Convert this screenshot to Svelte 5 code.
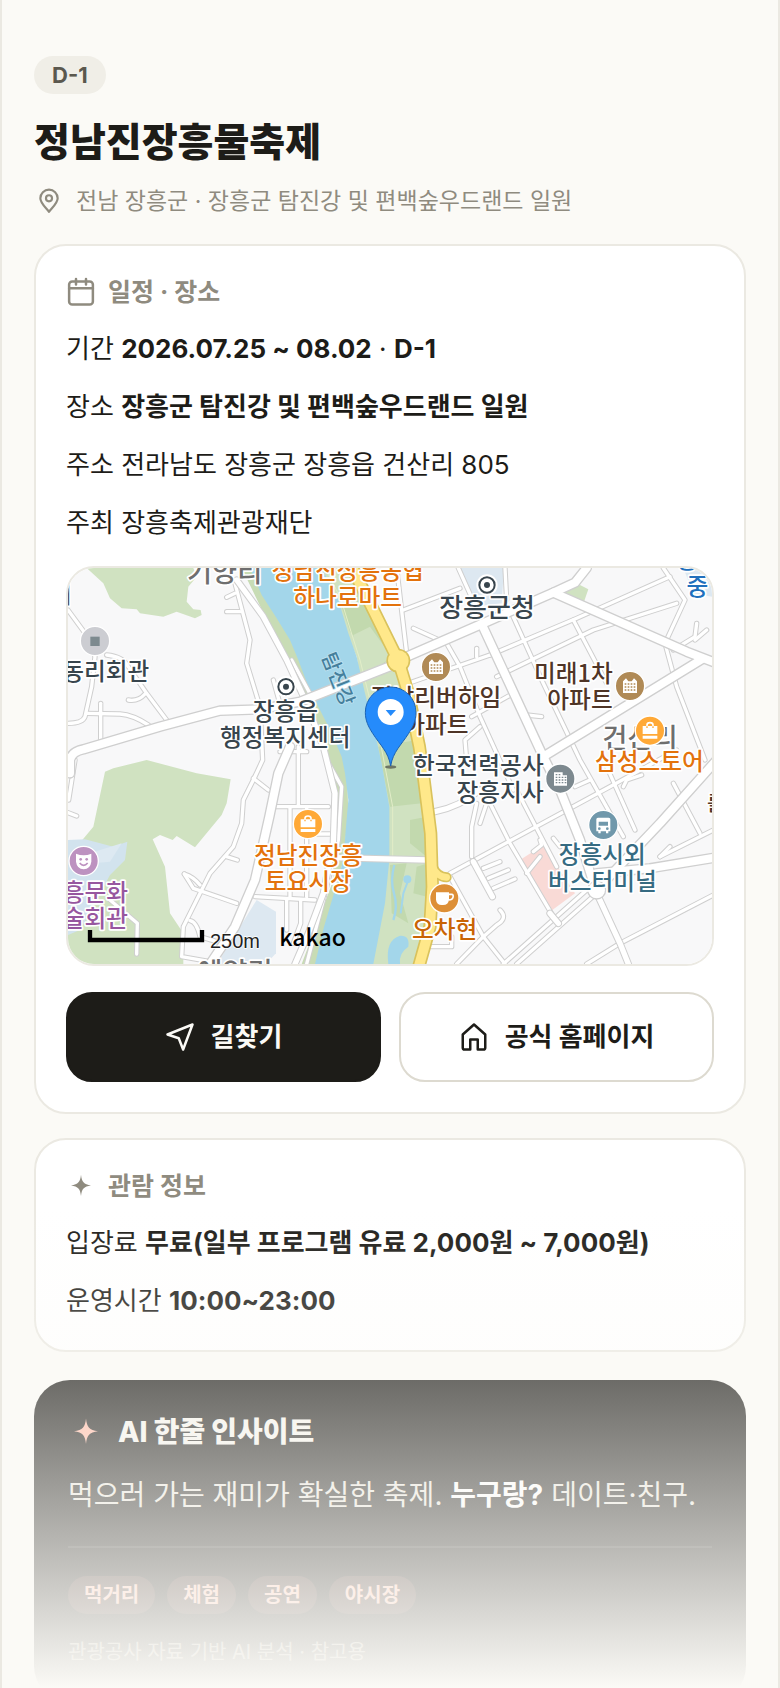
<script>
  const rows = [
    { label: "기간", strong: "2026.07.25 ~ 08.02", tail: "·", extra: "D-1" },
    { label: "장소", strong: "장흥군 탐진강 및 편백숲우드랜드 일원" },
    { label: "주소", text: "전라남도 장흥군 장흥읍 건산리 805" },
    { label: "주최", text: "장흥축제관광재단" },
  ];

  const visit = [
    { label: "입장료", strong: "무료(일부 프로그램 유료 2,000원 ~ 7,000원)" },
    { label: "운영시간", strong: "10:00~23:00" },
  ];

  const tags = ["먹거리", "체험", "공연", "야시장"];

  // map geometry: three units per pixel
  const lanes = [
    "M525 70L570 240L560 310L600 440L608 600L580 660L550 720L545 790L520 860L450 940L370 1100L365 1190L450 1205",
    "M24 150L90 240L105 290L95 380L75 470Q68 490 24 490",
    "M140 285Q190 290 205 320L260 400L320 480",
    "M80 460L180 462Q220 465 265 495",
    "M122 430V540",
    "M500 155H540",
    "M500 112L525 100",
    "M205 420Q235 425 255 402",
    "M695 300L755 410",
    "M640 360L665 450",
    "M580 655L625 690",
    "M373 942L400 985L530 1030",
    "M373 942Q400 950 420 975",
    "M500 890L532 900",
    "M390 1082Q410 1085 420 1130L470 1145",
    "M640 740H805",
    "M715 560V738",
    "M690 740V1010",
    "M740 740V1010",
    "M585 1010L765 1020",
    "M680 1020V1110",
    "M722 1020V1090L700 1150",
    "M765 822H810",
    "M230 1182L232 1090L150 1020",
    "M45 600L26 720",
    "M24 758L50 768",
    "M800 600L845 680L835 840L790 1020L740 1212",
    "M660 575H740",
    "M1010 24L1040 280",
    "M1030 150L1200 85",
    "M1195 24L1265 180",
    "M1335 24L1340 120",
    "M1355 160L1450 370L1560 600L1690 830",
    "M1290 285L1550 175L1830 50",
    "M1310 350L1600 210L1850 130",
    "M1810 24L1875 120L1815 250L1850 380L1935 600",
    "M1540 180L1640 370",
    "M1060 205L1160 250L1200 320L1260 470L1360 690",
    "M1045 370L1290 285",
    "M1910 190L1905 230L1840 270",
    "M1940 210L1905 240",
    "M1235 470L1360 400L1400 465L1445 470",
    "M1250 290V265",
    "M1220 600L1215 540L1260 500",
    "M1170 940L1650 680L1850 570",
    "M1285 720L1350 850L1480 1070",
    "M1370 690L1490 920",
    "M1170 950L1270 1130L1335 1212",
    "M1580 990L1330 1212",
    "M1610 1000L1370 1212",
    "M1270 1130L1190 1212",
    "M1580 1212L1680 1150L1960 1005",
    "M1640 620L1725 810",
    "M1840 670L1920 820",
    "M1800 890L1960 810",
    "M1800 890L1830 860",
    "M1250 730L1235 800V890",
    "M1290 700L1260 790",
    "M1270 925L1320 905",
    "M1285 955L1345 930",
    "M1300 985L1365 957",
    "M1320 1050Q1345 1075 1310 1095L1270 1130",
    "M1420 875L1445 855L1440 840",
    "M1480 835L1500 860",
    "M1545 680L1590 660",
    "M1690 680L1700 660L1745 645",
    "M1400 940L1440 890",
    "M1115 1160H1175V1130",
  ];
  const streets = [
    "M530 60L610 170L680 300L740 430L790 560L825 700L820 850L790 1000L745 1120L705 1212",
    "M1125 755Q1200 740 1260 690",
    "M1240 905L1297 1010",
    "M1615 1010L1680 1150L1705 1212",
    "M1470 1060L1495 1090",
    "M820 893L1105 900",
  ];
  const avenues = [
    "M30 640V600Q35 575 70 568L300 500L480 452L600 448L720 425L1000 315L1045 288L1265 192L1480 98L1545 68L1580 24",
    "M1265 192L1445 580L1500 690L1560 840L1610 1000",
    "M1480 98L1880 275L1970 310",
    "M1925 298L1450 590",
    "M1970 600L1800 790L1610 990",
    "M1610 940L1770 925L1970 892",
    "M690 560L655 640L628 770L585 960L525 1100L445 1220",
  ];

  const labels = [
    { t: "기양리", x: 607, y: 66, s: 82, a: "end", c: "#6e6e6e" },
    { t: "리", x: 37, y: 130, s: 82, a: "end", c: "#55585c" },
    { t: "정남진장흥농협", x: 863, y: 58, c: "#e3720c" },
    { t: "하나로마트", x: 863, y: 138, c: "#e3720c" },
    { t: "동리회관", x: 268, y: 360, a: "end" },
    { t: "장흥읍", x: 676, y: 480 },
    { t: "행정복지센터", x: 676, y: 559 },
    { t: "장흥군청", x: 1281, y: 172, s: 78 },
    { t: "정남리버하임", x: 1128, y: 438, c: "#4f3527" },
    { t: "아파트", x: 1128, y: 518, c: "#4f3527" },
    { t: "미래1차", x: 1658, y: 365, a: "end", c: "#4f3527" },
    { t: "아파트", x: 1658, y: 444, a: "end", c: "#4f3527" },
    { t: "건산리", x: 1740, y: 563, s: 82, c: "#6e6e6e" },
    { t: "삼성스토어", x: 1768, y: 630, c: "#e3720c" },
    { t: "한국전력공사", x: 1451, y: 643, a: "end" },
    { t: "장흥지사", x: 1451, y: 722, a: "end" },
    { t: "장흥시외", x: 1627, y: 910, c: "#366b82" },
    { t: "버스터미널", x: 1627, y: 990, c: "#366b82" },
    { t: "오차현", x: 1154, y: 1134, c: "#c96405" },
    { t: "정남진장흥", x: 745, y: 911, c: "#e3720c" },
    { t: "토요시장", x: 745, y: 990, c: "#e3720c" },
    { t: "장흥문화", x: 204, y: 1022, a: "end", c: "#97579f" },
    { t: "예술회관", x: 204, y: 1102, a: "end", c: "#97579f" },
    { t: "흥", x: 1882, y: 25, c: "#2170bd" },
    { t: "중", x: 1912, y: 104, c: "#2170bd" },
    { t: "예양리", x: 525, y: 1265, s: 82, c: "#6e6e6e" },
    { t: "를", x: 1941, y: 752, s: 60, a: "start", c: "#4f3527" },
  ];
</script>

{#snippet spark()}
  <svg class="spark" viewBox="0 0 24 24" aria-hidden="true">
    <path d="M12 3C12.600 8.800 14.200 10.600 20 11.500C14.200 12.400 12.600 14.200 12 20C11.400 14.200 9.800 12.400 4 11.500C9.800 10.600 11.400 8.800 12 3Z" fill="currentColor" />
  </svg>
{/snippet}

{#snippet roads(list, size)}
  {#each list as d}<path class="road {size} edge" {d} />{/each}
  {#each list as d}<path class="road {size}" {d} />{/each}
{/snippet}

<main class="page">
  <header class="head">
    <span class="badge">D-1</span>
    <h1>정남진장흥물축제</h1>
    <p class="where">
      <svg viewBox="0 0 24 24" aria-hidden="true">
        <path d="M12 22C9 18 4 14 4 9.500a8 8 0 0 1 16 0C20 14 15 18 12 22Z" />
        <circle cx="12" cy="9.500" r="2.800" />
      </svg>
      전남 장흥군 · 장흥군 탐진강 및 편백숲우드랜드 일원
    </p>
  </header>

  <section class="card">
    <h2>
      <svg viewBox="0 0 24 24" aria-hidden="true">
        <rect x="2.500" y="3.500" width="19" height="18.500" rx="2.500" />
        <path d="M2.500 9H21.500M8 1.500V6M16 1.500V6" />
      </svg>
      일정 · 장소
    </h2>
    {#each rows as row}
      <p class="row">
        {row.label}
        {#if row.strong}<strong>{row.strong}</strong>{/if}
        {#if row.extra}{row.tail} <strong>{row.extra}</strong>{/if}
        {row.text ?? ""}
      </p>
    {/each}

    <div class="map">
      <svg viewBox="24 24 1932 1188" preserveAspectRatio="xMidYMid slice" role="img" aria-label="지도">
        <rect x="0" y="0" width="2000" height="1300" fill="#f8f8f9" />

        <!-- hills and parks -->
        <g fill="#d0e2c1">
          <path d="M80 24L130 70L150 115L185 145L230 148L240 160L310 170L350 155L405 175L425 165L422 150L400 148L380 125L385 80L410 50L400 24Z" />
          <path d="M160 625L260 600L410 640L512 658L500 730L485 765L405 862L350 828L338 840L300 825L278 838L315 920L330 1060L370 1120V1212H24V1000L50 860L100 800L135 635Z" />
          <path d="M1505 100L1560 75L1585 88L1572 125L1510 108Z" />
          <path d="M780 24H880L1010 300L1085 620L1112 850L1115 1000L1080 1212H920L985 900L890 290Z" />
        </g>
        <path d="M545 24H600L860 600L865 760L850 900L770 1212H725L820 960L832 760L800 600L715 400L640 220Z" fill="#c8dcb5" />
        <g fill="#c2d9ae">
          <path d="M835 110L890 90L1000 270L960 330L870 215Z" />
          <path d="M955 560L1070 540L1085 730L990 740Z" />
          <path d="M990 915L1040 910L1020 1000L1045 1090L995 1060Z" />
          <path d="M1050 780L1100 770V890L1050 850Z" />
          <path d="M1070 920L1105 910L1100 1010L1060 1000Z" />
        </g>
        <path d="M880 225L930 200L995 290L915 350Z" fill="#d0e2c1" />
        <g fill="#dde8f1">
          <path d="M1200 24H1332L1325 130L1235 140Z" />
          <path d="M590 1020L648 1055V1180L600 1230H460Z" />
          <path d="M1870 24H1956V110L1900 100Z" />
        </g>
        <path d="M24 840L75 838L160 860L202 845L195 900L150 945L60 1110L24 1125Z" fill="#d2e3ee" />
        <path d="M90 880L185 850L150 905L100 910Z" fill="#dde9f2" />
        <path d="M1380 900L1450 855L1545 1000L1470 1055Z" fill="#f9dad6" />

        <!-- river -->
        <path d="M570 24L605 105L650 175L690 240L715 300L745 380L780 450L815 520L845 590L855 640L865 720L858 800L850 900L822 1000L792 1100L765 1212H940L975 1030L988 900V740L965 610L945 520L915 400L890 290L865 220L835 120L785 24Z" fill="#a3d6ea" />
        <path d="M795 24L842 115L873 215L900 300L925 400L958 530L975 620L998 740V900" fill="none" stroke="#e2edc8" stroke-width="3" />
        <g fill="none" stroke="#a3d6ea">
          <path d="M1003 915Q990 960 1002 1000T1000 1080" stroke-width="7" />
          <path d="M1045 960L1030 1000L1022 1060" stroke-width="6" />
        </g>
        <circle cx="1042" cy="958" r="12" fill="#a3d6ea" />
        <path d="M985 1212Q975 1140 1020 1127Q1050 1125 1045 1160Q1015 1180 1020 1212Z" fill="#a3d6ea" />

        {@render roads(lanes, "lane")}
        {@render roads(streets, "street")}
        {@render roads(avenues, "avenue")}
        <circle cx="1610" cy="990" r="27" fill="#fff" stroke="#cfcfcf" stroke-width="4" />

        <!-- trunk road -->
        {#each ["#d9c25c", "#ffe88a"] as tone, i}
          <g fill="none" stroke={tone} stroke-width={i ? 30 : 40} stroke-linejoin="round">
            <path d="M870 10L940 150L1015 302L1045 400L1078 560L1092 660L1112 820L1117 980L1110 1100L1075 1225" />
            <path d="M1118 920Q1130 950 1160 952" stroke-width={i ? 20 : 30} stroke-linecap="round" />
          </g>
          <circle cx="1015" cy="302" r={i ? 31 : 36} fill={tone} />
        {/each}

        <text class="river" transform="translate(815 365) rotate(68)">탐진강</text>
        {#each labels as l}
          <text x={l.x} y={l.y} font-size={l.s ?? 71} text-anchor={l.a ?? "middle"} fill={l.c ?? "#38454d"}>{l.t}</text>
        {/each}

        <!-- public offices -->
        {#each [[678, 380], [1281, 75]] as [x, y]}
          <g transform="translate({x} {y})">
            <circle r="32" fill="#fff" />
            <circle r="23" fill="#fff" stroke="#38454d" stroke-width="6" />
            <circle r="9" fill="#38454d" />
          </g>
        {/each}

        <g stroke="#fff" stroke-width="4">
          <circle cx="105" cy="243" r="44" fill="#cccdd2" />
          <circle cx="1128" cy="321" r="44" fill="#b08a56" />
          <circle cx="1710" cy="378" r="44" fill="#b08a56" />
          <circle cx="1770" cy="512" r="44" fill="#ffa937" />
          <circle cx="744" cy="792" r="44" fill="#ffa937" />
          <circle cx="1501" cy="656" r="44" fill="#7d898f" />
          <circle cx="1630" cy="795" r="44" fill="#7098ab" />
          <circle cx="71" cy="903" r="44" fill="#bd92c0" />
          <circle cx="1153" cy="1015" r="44" fill="#dd8f37" />
        </g>
        <rect x="91" y="230" width="28" height="28" fill="#7d8a8f" />
        {#each [[1128, 321], [1710, 378]] as [x, y]}
          <g transform="translate({x} {y})">
            <path d="M-21 21V-14L-12 -23L-5 -14H5L12 -23L21 -14V21Z" fill="#fff" />
            <path d="M-16 -6H16M-16 3H16M-16 12H16" stroke="#b08a56" stroke-width="5" stroke-dasharray="5 4" />
          </g>
        {/each}
        {#each [[1770, 512], [744, 792]] as [x, y]}
          <g transform="translate({x} {y})">
            <path d="M-22 -14H22V10H-22ZM-22 15H22V24H-22Z" fill="#fff" />
            <path d="M-9 -8V-17Q-9 -24 0 -24T9 -17V-8" fill="none" stroke="#fff" stroke-width="5" />
            <path d="M-9 -13V-8M9 -13V-8" stroke="#ffa937" stroke-width="4" />
          </g>
        {/each}
        <g transform="translate(1501 656)">
          <path d="M-19 21V-19H7V-10H20V21Z" fill="#fff" />
          <path d="M-14 -12H4M-14 -4H18M-14 4H18M-14 12H18" stroke="#7d898f" stroke-width="4" stroke-dasharray="5 4" />
        </g>
        <g transform="translate(1630 795)">
          <path d="M-16 -22H16Q21 -22 21 -17V19H15V25H8V19H-8V25H-15V19H-21V-17Q-21 -22 -16 -22Z" fill="#fff" />
          <path d="M-14 -10H14V2H-14Z" fill="#7098ab" />
          <circle cx="-12" cy="11" r="4" fill="#7098ab" /><circle cx="12" cy="11" r="4" fill="#7098ab" />
        </g>
        <g transform="translate(71 903)">
          <path d="M-23 -22Q0 -12 23 -22V2Q20 24 0 25Q-20 24 -23 2Z" fill="#fff" />
          <circle cx="-9" cy="-5" r="4" fill="#bd92c0" /><circle cx="9" cy="-5" r="4" fill="#bd92c0" />
          <path d="M-12 6Q0 20 12 6" fill="none" stroke="#bd92c0" stroke-width="5" />
        </g>
        <g transform="translate(1153 1015)">
          <path d="M-25 -18H14V4Q12 20 -4 20H-8Q-23 20 -25 4Z" fill="#fff" />
          <path d="M14 -12H22Q28 -12 26 -3Q24 5 13 5" fill="none" stroke="#fff" stroke-width="5" />
        </g>

        <!-- festival pin -->
        <ellipse cx="992" cy="621" rx="17" ry="5" fill="#333" opacity="0.6" />
        <path d="M992 618C985 575 960 555 938 520C925 500 916 482 916 457A76 76 0 0 1 1068 457C1068 482 1059 500 1046 520C1024 555 999 575 992 618Z" fill="#258bfb" stroke="#1b62b5" stroke-width="3" />
        <circle cx="992" cy="456" r="39" fill="#fff" />
        <path d="M977 450H1008L992 468Z" fill="#258bfb" />

        <path d="M90 1110V1140H426V1110" fill="none" stroke="#000" stroke-width="13" />
        <text class="scale" x="450" y="1163">250m</text>
        <text class="brand" x="658" y="1157">kakao</text>
      </svg>
    </div>

    <div class="actions">
      <button class="primary" type="button">
        <svg viewBox="0 0 24 24" aria-hidden="true"><path d="M22 2L14.500 22L11 13L2 10Z" /></svg>
        길찾기
      </button>
      <a href="#home">
        <svg viewBox="0 0 24 24" aria-hidden="true"><path d="M3 10L12 2L21 10V20.500Q21 22 19.500 22H15V14H9V22H4.500Q3 22 3 20.500Z" /></svg>
        공식 홈페이지
      </a>
    </div>
  </section>

  <section class="card">
    <h2>{@render spark()}관람 정보</h2>
    {#each visit as row}
      <p class="row">{row.label} <strong>{row.strong}</strong></p>
    {/each}
  </section>

  <section class="insight">
    <h2>{@render spark()}AI 한줄 인사이트</h2>
    <p class="summary">먹으러 가는 재미가 확실한 축제. <strong>누구랑?</strong> 데이트·친구.</p>
    <ul>
      {#each tags as tag}<li>{tag}</li>{/each}
    </ul>
    <p class="source">관광공사 자료 기반 AI 분석 · 참고용</p>
  </section>

  <div class="fade"></div>
</main>

<style>
  :global(body) {
    background: #fbfaf6;
  }
  .page {
    --ink: #1d1c18;
    --muted: #8f8b7f;
    --line: #ebe9e2;
    position: relative;
    box-sizing: border-box;
    height: 100vh;
    overflow: hidden;
    padding: 56px 32px 0;
    border: solid var(--line);
    border-width: 0 2px;
    background: #fbfaf6;
    color: var(--ink);
    font-family: Inter, "Noto Sans CJK KR", sans-serif;
    font-size: 26px;
    line-height: 38px;
  }
  h1, h2, p, ul { margin: 0; padding: 0; }
  svg {
    flex: none;
    fill: none;
    stroke: currentColor;
    stroke-width: 2;
    stroke-linejoin: round;
    stroke-linecap: round;
  }

  .badge {
    display: block;
    width: fit-content;
    padding: 0 18px;
    border-radius: 19px;
    background: #f0eee7;
    color: #5b584e;
    font-size: 22px;
    font-weight: 700;
  }
  h1 {
    margin-top: 20px;
    font-size: 39px;
    line-height: 56px;
    font-weight: 800;
  }
  .where {
    display: flex;
    align-items: center;
    gap: 14px;
    margin: 12px 0 24px;
    padding-left: 2px;
    color: var(--muted);
    font-size: 23px;
    line-height: 38px;
  }
  .where svg { width: 26px; height: 26px; }

  .card {
    margin-bottom: 24px;
    padding: 30px;
    border: 2px solid var(--line);
    border-radius: 32px;
    background: #fff;
  }
  h2 {
    display: flex;
    align-items: center;
    gap: 12px;
    color: var(--muted);
    font-size: 25px;
    line-height: 32px;
    font-weight: 700;
  }
  h2 svg { width: 30px; height: 30px; }
  .row { margin-top: 20px; }
  h2 + .row { margin-top: 22px; }
  strong { font-weight: 700; }

  .map {
    height: 396px;
    margin-top: 24px;
    overflow: hidden;
    border: 2px solid var(--line);
    border-radius: 28px;
  }
  .map svg {
    display: block;
    width: 100%;
    height: 100%;
    stroke: none;
    stroke-linecap: butt;
    stroke-linejoin: miter;
  }
  .map text {
    font-family: "Noto Sans CJK KR", sans-serif;
    font-weight: 500;
    stroke: #fff;
    stroke-width: 10px;
    stroke-linejoin: round;
    paint-order: stroke;
  }
  .map .river {
    fill: #457f9c;
    stroke: #bfe2f0;
    stroke-width: 5px;
    font-size: 60px;
    text-anchor: middle;
  }
  .map .scale {
    fill: #222;
    font-family: "Liberation Sans", sans-serif;
    font-size: 60px;
    font-weight: 400;
    stroke-width: 4px;
  }
  .map .brand {
    fill: #000;
    font-size: 69px;
    stroke: none;
  }
  .road {
    fill: none;
    stroke: #fff;
    stroke-linecap: round;
    stroke-linejoin: round;
  }
  .lane { stroke-width: 10; }
  .street { stroke-width: 16; }
  .avenue { stroke-width: 24; }
  .edge { stroke: #cfcfcf; }
  .lane.edge { stroke-width: 16; }
  .street.edge { stroke-width: 22; }
  .avenue.edge { stroke-width: 32; }

  .actions {
    display: grid;
    grid-template-columns: 1fr 1fr;
    gap: 18px;
    margin-top: 26px;
  }
  .actions > * {
    box-sizing: border-box;
    display: flex;
    align-items: center;
    justify-content: center;
    gap: 16px;
    height: 90px;
    border: 2px solid #dddad0;
    border-radius: 26px;
    background: #fff;
    color: var(--ink);
    font: inherit;
    font-weight: 700;
    text-decoration: none;
  }
  .actions .primary {
    border-color: var(--ink);
    background: var(--ink);
    color: #fbfaf6;
  }
  .actions svg { width: 30px; height: 30px; }

  .insight {
    margin-top: 28px;
    padding: 34px;
    border-radius: 36px;
    background: var(--ink);
    color: #e8e5dc;
  }
  .insight h2 {
    gap: 14px;
    color: #f5f3ec;
    font-size: 28px;
    line-height: 36px;
    font-weight: 800;
  }
  .insight .spark { width: 36px; height: 36px; color: #ffb8a3; }
  .summary {
    margin-top: 24px;
    padding-bottom: 30px;
    border-bottom: 2px solid #34332f;
    font-size: 28px;
    line-height: 42px;
  }
  .summary strong { color: #fff; }
  ul {
    display: flex;
    gap: 12px;
    padding-top: 28px;
    list-style: none;
  }
  li {
    padding: 0 16px;
    border-radius: 19px;
    background: #42302b;
    color: #ffc4b3;
    font-size: 20px;
    font-weight: 700;
  }
  .source {
    margin-top: 22px;
    color: #a5a195;
    font-size: 20px;
    line-height: 32px;
  }
  .spark { stroke: none; }
  .fade {
    position: absolute;
    inset: auto 0 0;
    height: 480px;
    background: linear-gradient(rgba(251, 250, 246, 0), #fbfaf6);
    pointer-events: none;
  }
</style>
